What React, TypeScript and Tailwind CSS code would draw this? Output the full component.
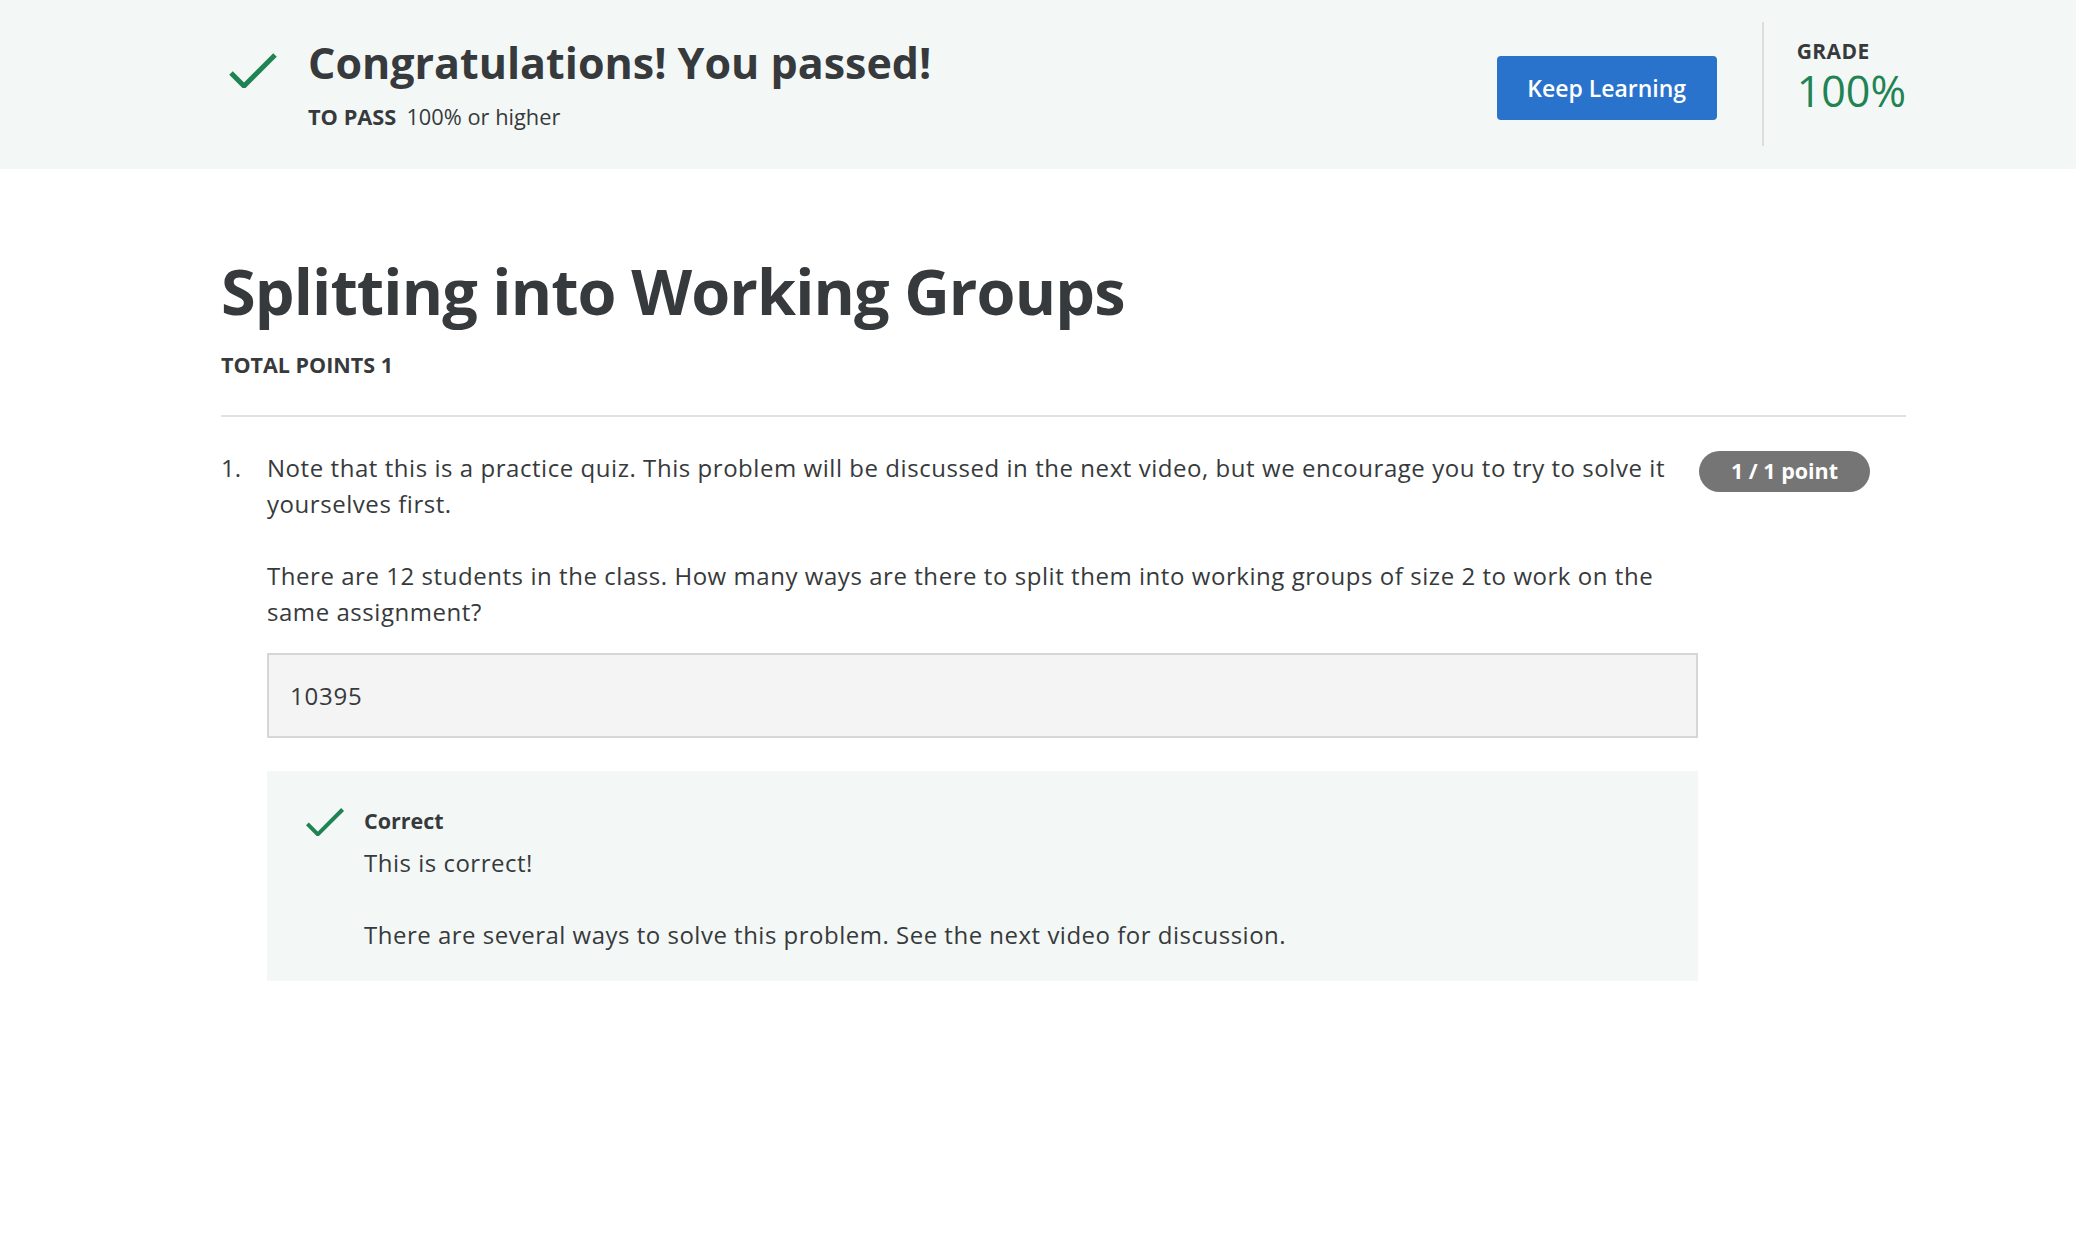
import React from "react";

function CheckIcon({ className }: { className?: string }) {
  return (
    <svg viewBox="0 0 50 36" className={className} fill="none">
      <path d="M3 21 L16 34 L47 3" stroke="#1f8354" strokeWidth="5" />
    </svg>
  );
}

export default function App() {
  return (
    <div className="min-h-screen bg-white font-['Open_Sans',sans-serif] text-[#373a3c]">
      <header className="h-[169px] bg-[#f3f8f6]">
        <div className="ml-[221px] flex h-full w-[1685px] items-start justify-between">
          <div className="flex items-start pt-[37px]">
            <CheckIcon className="ml-[7px] mt-[15px] h-[36px] w-[50px]" />
            <div className="ml-[30px]">
              <h1 className="text-[43px] font-bold leading-[52px]">Congratulations! You passed!</h1>
              <p className="mt-[14px] text-[21.8px] leading-[28px]">
                <span className="font-bold">TO PASS</span>
                <span className="ml-[10px]">100% or higher</span>
              </p>
            </div>
          </div>
          <div className="flex items-start">
            <button className="mt-[56px] h-[64px] w-[220px] rounded-[4px] bg-[#2a73cc] text-[23px] font-semibold text-white">
              Keep Learning
            </button>
            <div className="ml-[45px] mt-[22px] h-[124px] w-[2px] bg-[#dcdcdc]" />
            <div className="ml-[33px] flex flex-col pt-[38px]">
              <span className="text-[21px] font-bold leading-[27px] tracking-[0.02em]">GRADE</span>
              <span className="text-[43px] font-normal leading-[52px] text-[#1f8354]">100%</span>
            </div>
          </div>
        </div>
      </header>

      <main className="ml-[221px] w-[1685px] pt-[84px]">
        <h2 className="text-[63px] font-bold leading-[76px] tracking-[-0.9px]">Splitting into Working Groups</h2>
        <p className="mt-[22px] text-[21.5px] font-bold leading-[28px]">TOTAL POINTS 1</p>
        <div className="mt-[36px] h-[2px] bg-[#e1e1e1]" />

        <div className="mt-[33px] flex items-start">
          <div className="w-[46px] shrink-0 text-[24px] leading-[36px]">1.</div>
          <div className="w-[1431px] shrink-0">
            <div className="space-y-[36px] text-[24px] leading-[36px] tracking-[0.55px]">
              <p>
                Note that this is a practice quiz. This problem will be discussed in the next video, but we
                encourage you to try to solve it yourselves first.
              </p>
              <p>
                There are 12 students in the class. How many ways are there to split them into working groups of
                size 2 to work on the same assignment?
              </p>
            </div>
            <div className="mt-[23px] flex h-[85px] items-center border-2 border-[#d6d6d6] bg-[#f4f4f4] pl-[21px] text-[24px] leading-[36px] tracking-[0.8px]">
              10395
            </div>
            <div className="mt-[33px] flex bg-[#f3f8f6] pb-[28px] pl-[38px] pt-[36px]">
              <CheckIcon className="h-[29px] w-[40px] shrink-0" />
              <div className="ml-[19px]">
                <p className="text-[21.5px] font-bold leading-[28px]">Correct</p>
                <div className="mt-[10px] space-y-[36px] text-[24px] leading-[36px] tracking-[0.5px]">
                  <p>This is correct!</p>
                  <p>There are several ways to solve this problem. See the next video for discussion.</p>
                </div>
              </div>
            </div>
          </div>
          <div className="ml-px mt-px flex h-[41px] w-[171px] shrink-0 items-center justify-center rounded-full bg-[#757575] text-[21.5px] font-bold text-white">
            1 / 1 point
          </div>
        </div>
      </main>
    </div>
  );
}
